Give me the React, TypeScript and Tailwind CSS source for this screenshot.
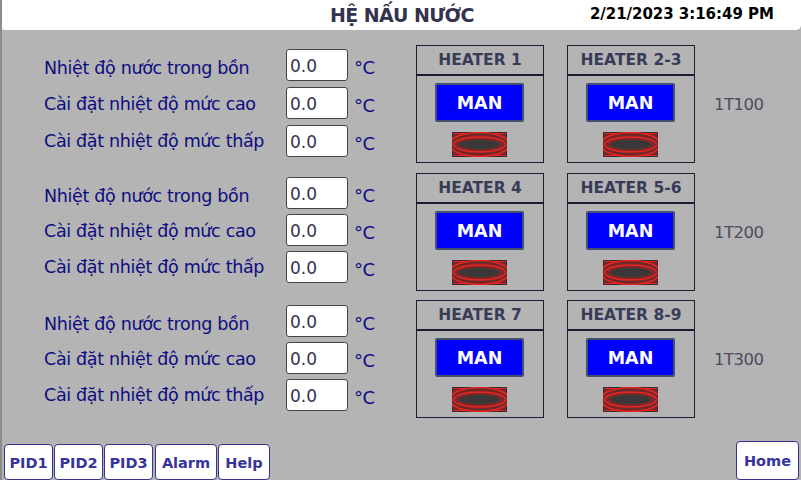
const FONT = "font-['DejaVu_Sans',sans-serif]";

const GROUPS = [
  { tag: "1T100", heaters: ["HEATER 1", "HEATER 2-3"], top: "mt-[15px]", inputTop: "pt-[4px]", rowGap: "gap-[6px]" },
  { tag: "1T200", heaters: ["HEATER 4", "HEATER 5-6"], top: "mt-[10px]", inputTop: "pt-[4px]", rowGap: "gap-[5px]" },
  { tag: "1T300", heaters: ["HEATER 7", "HEATER 8-9"], top: "mt-[9px]", inputTop: "pt-[5px]", rowGap: "gap-[5px]" },
];

const LABELS = [
  { text: "Nhiệt độ nước trong bồn", offset: "mt-[6px]" },
  { text: "Cài đặt nhiệt độ mức cao", offset: "mt-[2px]" },
  { text: "Cài đặt nhiệt độ mức thấp", offset: "mt-[1px]" },
];

function Lamp() {
  return (
    <svg width="55" height="25" viewBox="0 0 55 25" className="block">
      <rect x="0" y="0" width="55" height="25" fill="#3a2c30" />
      <rect x="1" y="1" width="53" height="23" fill="#6e2a2a" />
      <path d="M1 1.5H54M1 23.5H54" stroke="#e02222" strokeWidth="1" />
      <ellipse cx="27.5" cy="12.5" rx="30" ry="12" fill="#6e2a2a" stroke="#f02222" strokeWidth="1.5" />
      <ellipse cx="27.5" cy="12.5" rx="26" ry="7.5" fill="#7a2a2a" stroke="#f02222" strokeWidth="1.5" />
      <ellipse cx="27.5" cy="12.5" rx="20" ry="4.5" fill="#383838" />
    </svg>
  );
}

function HeaterCard({ name }: { name: string }) {
  return (
    <div className="w-[128px] h-[118px] border border-[#1c1c34] flex flex-col items-center">
      <div className="w-full h-[30px] border-b-2 border-[#1c1c34] flex items-center justify-center pt-[2px] text-[15.5px] font-bold text-[#383c58] shrink-0">
        {name}
      </div>
      <div className="mt-[7px] mr-[1px] w-[89px] h-[39px] bg-[#0000ff] border-2 border-[#44506c] rounded-[2px] flex items-center justify-center pt-[2px] text-white font-bold text-[17.5px]">
        MAN
      </div>
      <div className="mt-[10px] mr-[1px]">
        <Lamp />
      </div>
    </div>
  );
}

function Group({ g }: { g: (typeof GROUPS)[number] }) {
  return (
    <div className={`${g.top} flex`}>
      <div className={`w-[414px] pl-[42px] ${g.inputTop} flex flex-col ${g.rowGap}`}>
        {LABELS.map((label) => (
          <div key={label.text} className="flex items-center h-[32px]">
            <span className={`w-[242px] ${label.offset} text-[17.5px] tracking-[-0.33px] text-[#0c0c80] whitespace-nowrap`}>{label.text}</span>
            <div className="w-[62px] h-[32px] bg-white border border-[#444] rounded-[3px] pl-[3px] pt-[3px] flex items-center text-[17px] text-[#33334d]">
              0.0
            </div>
            <span className="ml-[6px] mt-[5px] text-[18px] tracking-[-0.6px] text-[#0c0c80]">°C</span>
          </div>
        ))}
      </div>
      <div className="flex gap-[23px]">
        {g.heaters.map((h) => (
          <HeaterCard key={h} name={h} />
        ))}
      </div>
      <div className="ml-[19px] flex items-center mt-[2px] text-[16.5px] tracking-[-0.5px] text-[#4c4c5c]">{g.tag}</div>
    </div>
  );
}

function NavButton({ label, width }: { label: string; width: string }) {
  return (
    <button className={`${width} h-[36px] bg-white border border-[#34348c] rounded-[4px] flex items-center justify-center pt-[3px] text-[14.5px] font-bold text-[#34349c]`}>
      {label}
    </button>
  );
}

export default function App() {
  return (
    <div className={`w-[801px] h-[480px] overflow-hidden bg-[#b4b4b4] border-l-2 border-[#8c8c8c] box-border flex flex-col ${FONT}`}>
      <div className="h-[30px] -ml-[2px] bg-white rounded-b-[5px] flex items-center shrink-0">
        <span className="ml-[330px] text-[19px] font-bold tracking-[-0.6px] text-[#33334d] whitespace-nowrap">HỆ NẤU NƯỚC</span>
        <span className="ml-[116px] -mt-[1px] text-[15px] font-bold tracking-[-0.03px] text-black whitespace-nowrap">2/21/2023 3:16:49 PM</span>
      </div>
      {GROUPS.map((g) => (
        <Group key={g.tag} g={g} />
      ))}
      <div className="mt-auto flex items-end pl-[2px] pr-[2px]">
        <div className="flex gap-[1px]">
          <NavButton label="PID1" width="w-[49px]" />
          <NavButton label="PID2" width="w-[49px]" />
          <NavButton label="PID3" width="w-[49px]" />
          <NavButton label="Alarm" width="w-[62px] ml-[1px]" />
          <NavButton label="Help" width="w-[52px]" />
        </div>
        <button className="ml-auto w-[63px] h-[39px] bg-white border border-[#34348c] rounded-[4px] pt-[2px] text-[14.5px] font-bold text-[#34349c] flex items-center justify-center">
          Home
        </button>
      </div>
    </div>
  );
}
